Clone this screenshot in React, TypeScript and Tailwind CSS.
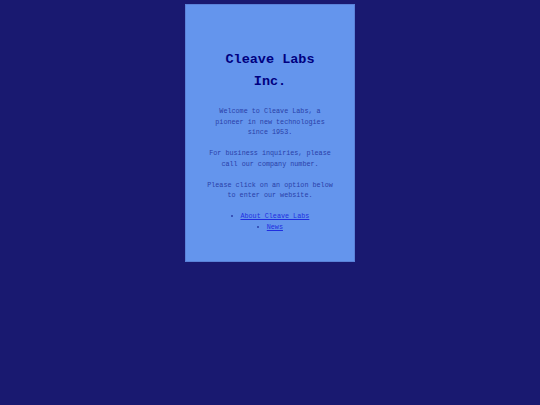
const links = ["About Cleave Labs", "News"];

export default function App() {
	return (
		<div className="flex min-h-[405px] justify-center bg-[#191970] pt-[4px] font-['Liberation_Mono','DejaVu_Sans_Mono',monospace]">
			<div className="h-[258px] w-[170px] border border-[#5a82d8] bg-[#6495ed] px-[20px] pt-[44px] text-center">
				<h1 className="text-[13.5px] leading-[22px] font-bold text-[#000080]">Cleave Labs Inc.</h1>
				<div className="mt-[13px] flex flex-col gap-[10.5px] text-[6.75px] leading-[10.5px] text-[#2a3fa8]">
					<p>Welcome to Cleave Labs, a pioneer in new technologies since 1953.</p>
					<p>For business inquiries, please call our company number.</p>
					<p>Please click on an option below to enter our website.</p>
					<ul className="list-inside list-disc">
						{links.map((label) => (
							<li key={label}>
								<a href="#" className="text-[#1f2fe0] underline">
									{label}
								</a>
							</li>
						))}
					</ul>
				</div>
			</div>
		</div>
	);
}
